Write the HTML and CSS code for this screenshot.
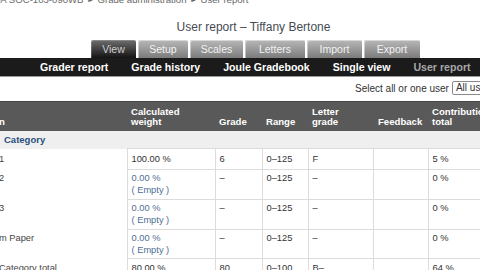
FILE: index.html
```html
<!DOCTYPE html>
<html>
<head>
<meta charset="utf-8">
<link rel="stylesheet" href="styles.css">
</head>
<body>
<div class="crumb">FA SOC-103-090WB <span class="sep">►</span> Grade administration <span class="sep">►</span> User report</div>
<div class="title">User report – Tiffany Bertone</div>
<div class="tabs">
  <div class="tab active w-view">View</div>
  <div class="tab w-setup">Setup</div>
  <div class="tab w-scales">Scales</div>
  <div class="tab w-letters">Letters</div>
  <div class="tab w-import">Import</div>
  <div class="tab w-export">Export</div>
</div>
<div class="subnav">
  <span>Grader report</span>
  <span>Grade history</span>
  <span>Joule Gradebook</span>
  <span>Single view</span>
  <span class="current">User report</span>
</div>
<div class="userselect">
  <span>Select all or one user</span>
  <span class="selectbox">All users</span>
</div>
<table class="grades">
  <colgroup>
    <col class="c-name"><col class="c-weight"><col class="c-grade"><col class="c-range"><col class="c-letter"><col class="c-feedback"><col class="c-contrib">
  </colgroup>
  <tr class="head">
    <th class="name"><span class="cut">n</span></th>
    <th>Calculated<br>weight</th>
    <th>Grade</th>
    <th>Range</th>
    <th>Letter<br>grade</th>
    <th class="fb">Feedback</th>
    <th>Contribution<br>total</th>
  </tr>
  <tr class="cat">
    <td colspan="7">Category</td>
  </tr>
  <tr class="r1">
    <td class="name"><span class="cut">1</span></td>
    <td>100.00 %</td>
    <td>6</td>
    <td>0–125</td>
    <td>F</td>
    <td></td>
    <td>5 %</td>
  </tr>
  <tr class="r2">
    <td class="name"><span class="cut">2</span></td>
    <td class="muted">0.00 %<br>( Empty )</td>
    <td>–</td>
    <td>0–125</td>
    <td>–</td>
    <td></td>
    <td>0 %</td>
  </tr>
  <tr class="r3">
    <td class="name"><span class="cut">3</span></td>
    <td class="muted">0.00 %<br>( Empty )</td>
    <td>–</td>
    <td>0–125</td>
    <td>–</td>
    <td></td>
    <td>0 %</td>
  </tr>
  <tr class="r4">
    <td class="name"><span class="cut">m Paper</span></td>
    <td class="muted">0.00 %<br>( Empty )</td>
    <td>–</td>
    <td>0–125</td>
    <td>–</td>
    <td></td>
    <td>0 %</td>
  </tr>
  <tr class="r5">
    <td class="name"><span class="cut">Category total</span></td>
    <td>80.00 %</td>
    <td>80</td>
    <td>0–100</td>
    <td>B–</td>
    <td></td>
    <td>64 %</td>
  </tr>
</table>
</body>
</html>
```
FILE: styles.css
```css
html, body {
  margin: 0;
  padding: 0;
}
body {
  width: 480px;
  height: 270px;
  overflow: hidden;
  background: #fff;
  font-family: "Liberation Sans", Arial, sans-serif;
  color: #333;
}
.crumb {
  margin: -5px 0 0 -5px;
  height: 10px;
  line-height: 10px;
  font-size: 9.6px;
  color: #6a6a6a;
  white-space: nowrap;
}
.crumb .sep {
  font-family: "DejaVu Sans", sans-serif;
  font-size: 6px;
  margin: 0 2px;
  vertical-align: 1px;
}
.title {
  margin-top: 15px;
  padding-left: 27px;
  text-align: center;
  font-size: 12px;
  line-height: 14px;
  color: #464b53;
  white-space: nowrap;
}
.tabs {
  display: flex;
  gap: 2px;
  padding-left: 91px;
  margin-top: 6px;
  height: 18px;
}
.tab {
  height: 18px;
  line-height: 18px;
  text-align: center;
  font-size: 10.5px;
  color: #f2f2f2;
  background: linear-gradient(#b8b8b8, #7c7c7c);
  border-radius: 2px 2px 0 0;
  box-shadow: inset 1px 1px 0 rgba(255, 255, 255, 0.45);
}
.tab.active {
  background: linear-gradient(#6e6e6e, #141414);
  color: #cfcfcf;
  box-shadow: inset 1px 1px 0 rgba(255, 255, 255, 0.2);
}
.w-view { width: 45px; }
.w-setup { width: 50px; }
.w-scales { width: 53px; }
.w-letters { width: 60px; }
.w-import { width: 55px; }
.w-export { width: 56px; }
.subnav {
  display: flex;
  gap: 23px;
  padding-left: 40px;
  height: 18px;
  line-height: 18px;
  background: #1b1b1b;
  border-bottom: 1px solid #9a9a9a;
  font-weight: bold;
  font-size: 10.6px;
  color: #fff;
  white-space: nowrap;
}
.subnav .current {
  color: #a8a8a8;
}
.userselect {
  display: flex;
  align-items: center;
  margin-top: 4px;
  padding-left: 355px;
  height: 14px;
  font-size: 10px;
  color: #333;
  white-space: nowrap;
}
.selectbox {
  margin-left: 3px;
  height: 14px;
  box-sizing: border-box;
  border: 1px solid #8a8a8a;
  border-radius: 2px;
  padding: 0 3px;
  line-height: 12px;
  font-size: 10px;
  width: 60px;
  flex: none;
  background: #fff;
}
.grades {
  margin-top: 6px;
  border-collapse: collapse;
  table-layout: fixed;
  width: 500px;
  font-size: 9.3px;
}
.c-name { width: 127px; }
.c-weight { width: 88px; }
.c-grade { width: 47px; }
.c-range { width: 46px; }
.c-letter { width: 65px; }
.c-feedback { width: 55px; }
.c-contrib { width: 72px; }
.grades th {
  background: #595959;
  color: #fff;
  font-weight: bold;
  font-size: 9.6px;
  line-height: 10px;
  text-align: left;
  vertical-align: bottom;
  padding: 0 4px 4px;
  border-top: 1px solid #444;
  white-space: nowrap;
}
.grades th.fb {
  padding-left: 5px;
}
.grades th.name,
.grades td.name {
  padding-left: 0;
}
.cut {
  display: inline-block;
  margin-left: -1px;
  white-space: nowrap;
}
.head { height: 29px; }
.cat { height: 18px; }
.cat td {
  background: #efefef;
  color: #2a4f7e;
  font-weight: bold;
  font-size: 9.5px;
  padding: 0 5px;
  vertical-align: middle;
}
.grades td {
  vertical-align: top;
  padding: 3px 4px 0;
  line-height: 11.5px;
  border: 1px solid #dcdcdc;
  white-space: nowrap;
}
.grades td.name {
  border: none;
  color: #444;
}
.grades .cat td {
  border: none;
}
.r1 { height: 21px; }
.r1 td { padding-top: 5px; }
.r2 { height: 30px; }
.r3 { height: 30px; }
.r4 { height: 29px; }
.r5 { height: 30px; }
.r5 td { padding-top: 4px; }
.muted {
  color: #4f6e94;
}
```
